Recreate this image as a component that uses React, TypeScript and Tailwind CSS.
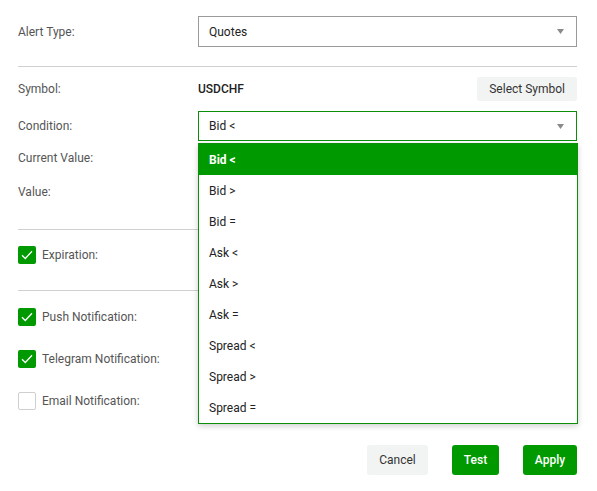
import { useState } from 'react';

const conditions = ['Bid <', 'Bid >', 'Bid =', 'Ask <', 'Ask >', 'Ask =', 'Spread <', 'Spread >', 'Spread ='];

function Arrow() {
  return (
    <svg width="7" height="5" viewBox="0 0 7 5" className="shrink-0">
      <path d="M0 0 H7 L3.5 5 Z" fill="#8a8a8a" />
    </svg>
  );
}

function Check({ checked }: { checked: boolean }) {
  return checked ? (
    <span className="flex h-[18px] w-[18px] items-center justify-center rounded-[2px] bg-[#009900]">
      <svg width="12" height="10" viewBox="0 0 12 10">
        <path d="M1 5.2 L4.3 8.5 L11 1.2" fill="none" stroke="#fff" strokeWidth="1.3" />
      </svg>
    </span>
  ) : (
    <span className="h-[18px] w-[18px] rounded-[2px] border border-[#cfcfcf] bg-white" />
  );
}

export default function App() {
  const [condition, setCondition] = useState('Bid <');
  const [open, setOpen] = useState(true);
  const [checks, setChecks] = useState({ exp: true, push: true, tg: true, email: false });

  return (
    <div className="h-[491px] w-[597px] bg-white pl-[18px] pr-[20px] pt-[16px] text-[12px] text-[#555] font-['Roboto',sans-serif]">
      {/* Alert type */}
      <div className="flex h-[31px] items-center">
        <span className="w-[180px]">Alert Type:</span>
        <div className="flex h-[31px] flex-1 items-center justify-between border border-[#9a9a9a] pl-[10px] pr-[12px] text-[#222]">
          <span>Quotes</span>
          <Arrow />
        </div>
      </div>

      <div className="mt-[19px] border-t border-[#d0d0d0]" />

      {/* Symbol */}
      <div className="mt-[10px] flex h-[24px] items-center">
        <span className="w-[180px]">Symbol:</span>
        <span className="flex-1 font-medium text-[#222]">USDCHF</span>
        <button className="h-[24px] rounded-[3px] bg-[#f2f3f3] px-[12px] text-[#333]">Select Symbol</button>
      </div>

      {/* Condition */}
      <div className="relative mt-[10px] flex h-[30px] items-center">
        <span className="w-[180px]">Condition:</span>
        <div
          onClick={() => setOpen(!open)}
          className="flex h-[30px] flex-1 cursor-pointer items-center justify-between border border-[#0b8f0b] pl-[10px] pr-[12px] text-[#222]"
        >
          <span>{condition}</span>
          <Arrow />
        </div>
        {open && (
          <ul className="absolute left-[180px] right-[-1px] top-[32px] z-10 border border-[#0b8f0b] bg-white shadow-[0_2px_6px_rgba(0,0,0,0.2)]">
            {conditions.map((c) => (
              <li
                key={c}
                onClick={() => {
                  setCondition(c);
                  setOpen(false);
                }}
                className={`flex h-[31px] cursor-pointer items-center pl-[10px] ${
                  c === condition ? 'bg-[#009900] font-bold text-white' : 'text-[#222]'
                }`}
              >
                {c}
              </li>
            ))}
          </ul>
        )}
      </div>

      <div className="mt-[2px] flex h-[30px] items-center">
        <span className="w-[180px]">Current Value:</span>
      </div>
      <div className="mt-[4px] flex h-[30px] items-center">
        <span className="w-[180px]">Value:</span>
      </div>

      <div className="mt-[22px] border-t border-[#d0d0d0]" />

      <div className="mt-[16px] flex h-[18px] items-center gap-[6px]" onClick={() => setChecks({ ...checks, exp: !checks.exp })}>
        <Check checked={checks.exp} />
        <span>Expiration:</span>
      </div>

      <div className="mt-[26px] border-t border-[#d0d0d0]" />

      <div className="mt-[17px] flex flex-col gap-[24px]">
        <div className="flex h-[18px] items-center gap-[6px]" onClick={() => setChecks({ ...checks, push: !checks.push })}>
          <Check checked={checks.push} />
          <span>Push Notification:</span>
        </div>
        <div className="flex h-[18px] items-center gap-[6px]" onClick={() => setChecks({ ...checks, tg: !checks.tg })}>
          <Check checked={checks.tg} />
          <span>Telegram Notification:</span>
        </div>
        <div className="flex h-[18px] items-center gap-[6px]" onClick={() => setChecks({ ...checks, email: !checks.email })}>
          <Check checked={checks.email} />
          <span>Email Notification:</span>
        </div>
      </div>

      {/* Actions */}
      <div className="mt-[35px] flex justify-end gap-[24px]">
        <button className="h-[30px] w-[61px] rounded-[3px] bg-[#f2f3f3] text-[#333]">Cancel</button>
        <button className="h-[30px] w-[47px] rounded-[3px] bg-[#009900] font-medium text-white">Test</button>
        <button className="h-[30px] w-[54px] rounded-[3px] bg-[#009900] font-medium text-white">Apply</button>
      </div>
    </div>
  );
}
